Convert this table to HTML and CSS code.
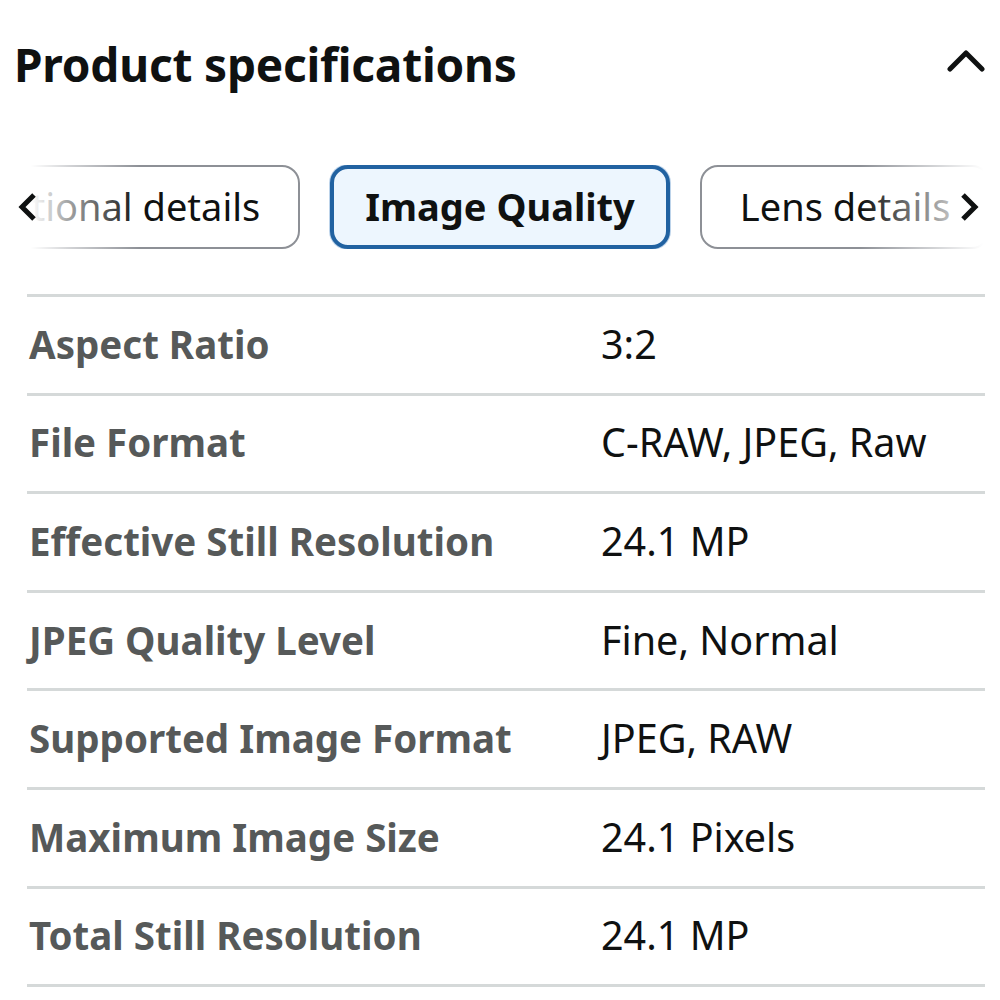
FILE: index.html
```html
<!DOCTYPE html>
<html lang="en">
<head>
<meta charset="utf-8">
<title>Product specifications</title>
<link rel="stylesheet" href="styles.css">
</head>
<body>
<section class="specs">
  <header class="specs-header">
    <h2 class="specs-title">Product specifications</h2>
    <button class="collapse-btn" aria-label="Collapse">
      <svg width="40" height="24" viewBox="0 0 40 24"><polyline points="3,20 19,4 35,20" fill="none" stroke="#0f1111" stroke-width="5" stroke-linecap="round" stroke-linejoin="round"/></svg>
    </button>
  </header>

  <div class="tabs">
    <div class="tabs-side tabs-left">
      <button class="tab">Additional details</button>
    </div>
    <button class="tab tab-active">Image Quality</button>
    <div class="tabs-side tabs-right">
      <button class="tab">Lens details</button>
    </div>
    <span class="tabs-arrow tabs-arrow-left">
      <svg width="20" height="30" viewBox="0 0 20 30"><polyline points="16,3 4,15 16,27" fill="none" stroke="#0f1111" stroke-width="5" stroke-linejoin="miter"/></svg>
    </span>
    <span class="tabs-arrow tabs-arrow-right">
      <svg width="20" height="30" viewBox="0 0 20 30"><polyline points="4,3 16,15 4,27" fill="none" stroke="#0f1111" stroke-width="5" stroke-linejoin="miter"/></svg>
    </span>
  </div>

  <table class="spec-table">
    <tbody>
      <tr><th>Aspect Ratio</th><td>3:2</td></tr>
      <tr><th>File Format</th><td>C-RAW, JPEG, Raw</td></tr>
      <tr><th>Effective Still Resolution</th><td>24.1 MP</td></tr>
      <tr><th>JPEG Quality Level</th><td>Fine, Normal</td></tr>
      <tr><th>Supported Image Format</th><td>JPEG, RAW</td></tr>
      <tr><th>Maximum Image Size</th><td>24.1 Pixels</td></tr>
      <tr><th>Total Still Resolution</th><td>24.1 MP</td></tr>
    </tbody>
  </table>
</section>
</body>
</html>
```

FILE: styles.css
```css
* { box-sizing: border-box; }

html, body {
  margin: 0;
  padding: 0;
  background: #ffffff;
}

body {
  font-family: "Noto Sans", "Open Sans", sans-serif;
  color: #0f1111;
  width: 1000px;
}

.specs {
  padding-top: 31px;
}

.specs-header {
  display: flex;
  align-items: center;
  justify-content: space-between;
  padding: 0 13px 0 14px;
}

.specs-title {
  margin: 0;
  font-size: 46px;
  line-height: 66px;
  font-weight: 700;
  color: #0f1111;
  letter-spacing: -0.2px;
}

.collapse-btn {
  border: 0;
  background: none;
  padding: 0;
  margin-top: -6px;
  display: flex;
}

.tabs {
  position: relative;
  display: flex;
  gap: 30px;
  margin-top: 68px;
  overflow: hidden;
  height: 84px;
}

.tabs-side {
  flex: 1 1 0;
  min-width: 0;
  display: flex;
}

.tabs-left { justify-content: flex-end; }
.tabs-right { justify-content: flex-start; }

.tab {
  flex: none;
  height: 84px;
  padding: 0 38px 3px;
  border: 2px solid #8d9096;
  border-radius: 18px;
  background: #ffffff;
  font-family: inherit;
  font-size: 38px;
  color: #0f1111;
  white-space: nowrap;
}

.tab-active {
  border: 4px solid #2162a1;
  background: #edf6fe;
  font-weight: 700;
  padding: 0 31px 3px;
  box-shadow: 0 0 0 1px #bcd3ea;
}

.tabs::before,
.tabs::after {
  content: "";
  position: absolute;
  top: 0;
  bottom: 0;
  width: 140px;
  pointer-events: none;
  z-index: 1;
}

.tabs::before {
  left: 0;
  background: linear-gradient(to right, #ffffff 22%, rgba(255,255,255,0.6) 50%, rgba(255,255,255,0) 100%);
}

.tabs::after {
  right: 0;
  background: linear-gradient(to left, #ffffff 12%, rgba(255,255,255,0) 100%);
}

.tabs-arrow {
  position: absolute;
  top: 27px;
  z-index: 2;
  display: flex;
}

.tabs-arrow-left { left: 18px; }
.tabs-arrow-right { right: 21px; }

.spec-table {
  margin: 45px 15px 0 27px;
  width: 958px;
  border-collapse: collapse;
}

.spec-table tr {
  border-top: 3px solid #d5d9d9;
  border-bottom: 3px solid #d5d9d9;
}

.spec-table th,
.spec-table td {
  height: 98.6px;
  padding: 0 0 2px;
  text-align: left;
  vertical-align: middle;
  white-space: nowrap;
}

.spec-table th {
  width: 574px;
  padding-left: 2px;
  font-size: 38.5px;
  font-weight: 700;
  color: #565959;
}

.spec-table td {
  font-size: 39.5px;
  font-weight: 400;
  color: #0f1111;
}
```
